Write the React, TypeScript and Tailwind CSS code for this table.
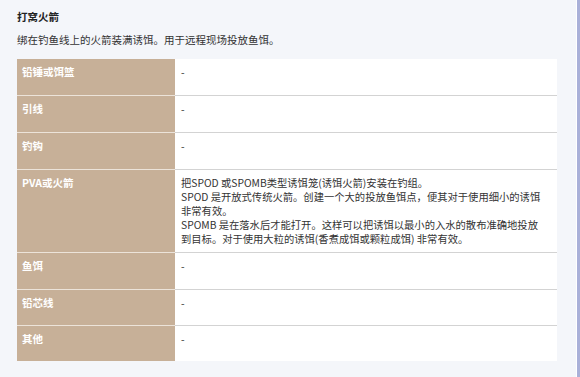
import React from "react";

const rows: { label: string; value: React.ReactNode; h: string }[] = [
  { label: "铅锤或饵篮", value: "-", h: "min-h-[36px]" },
  { label: "引线", value: "-", h: "min-h-[37px]" },
  { label: "钓钩", value: "-", h: "min-h-[37px]" },
  {
    label: "PVA或火箭",
    h: "min-h-[37px]",
    value: (
      <>
        把SPOD 或SPOMB类型诱饵笼(诱饵火箭)安装在钓组。
        <br />
        SPOD 是开放式传统火箭。创建一个大的投放鱼饵点，便其对于使用细小的诱饵非常有效。
        <br />
        SPOMB 是在落水后才能打开。这样可以把诱饵以最小的入水的散布准确地投放到目标。对于使用大粒的诱饵(香煮成饵或颗粒成饵) 非常有效。
      </>
    ),
  },
  { label: "鱼饵", value: "-", h: "min-h-[37px]" },
  { label: "铅芯线", value: "-", h: "min-h-[36px]" },
  { label: "其他", value: "-", h: "min-h-[36px]" },
];

export default function App() {
  return (
    <div
      className="w-[580px] h-[377px] bg-[#f4f6fa] flex overflow-hidden"
      style={{ fontFamily: '"Noto Sans CJK SC", "Noto Sans", sans-serif' }}
    >
      <div className="flex-1 flex flex-col pl-[17px] pr-[19px] pt-[9px]">
        <div className="text-[10.5px] leading-[16px] font-bold text-[#222]">打窝火箭</div>
        <div className="mt-[7px] text-[10.5px] leading-[16px] text-[#333]">
          绑在钓鱼线上的火箭装满诱饵。用于远程现场投放鱼饵。
        </div>
        <div className="mt-[11px] flex flex-col w-[540px]">
          {rows.map((r, i) => (
            <div key={i} className={`flex ${r.h}`}>
              <div
                className={`w-[158px] shrink-0 bg-[#c7b098] text-white font-bold text-[10.5px] leading-[14px] pl-[5px] pt-[6px] ${
                  i > 0 ? "border-t border-[#ece3d9]" : ""
                }`}
              >
                {r.label}
              </div>
              <div
                className={`flex-1 bg-white text-[#333] text-[10.3px] leading-[14px] pl-[6px] pr-[14px] pt-[6px] pb-[6px] ${
                  i > 0 ? "border-t border-[#d3d3d3]" : ""
                }`}
              >
                {r.value}
              </div>
            </div>
          ))}
        </div>
      </div>
      <div className="w-[1px] bg-white" />
      <div className="w-[3px] bg-[#a9b0d8]" />
    </div>
  );
}
